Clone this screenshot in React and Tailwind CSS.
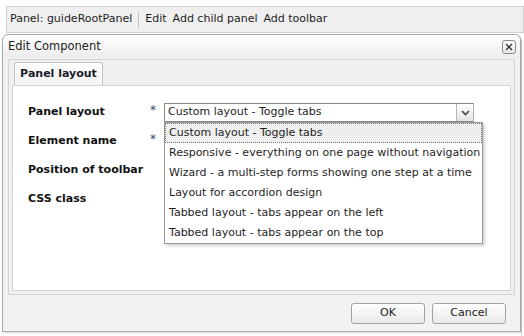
import React from 'react';

const options = [
  'Custom layout - Toggle tabs',
  'Responsive - everything on one page without navigation',
  'Wizard - a multi-step forms showing one step at a time',
  'Layout for accordion design',
  'Tabbed layout - tabs appear on the left',
  'Tabbed layout - tabs appear on the top',
];

const fields = [
  { label: 'Panel layout', required: true },
  { label: 'Element name', required: true },
  { label: 'Position of toolbar', required: false },
  { label: 'CSS class', required: false },
];

const App = () => {
  return (
    <div
      className="relative w-[524px] h-[336px] overflow-hidden bg-white text-[#1e1e1e]"
      style={{ fontFamily: '"DejaVu Sans", Tahoma, sans-serif' }}
    >
      {/* page toolbar behind the dialog */}
      <div className="mt-[6px] ml-[6px] h-[27px] border border-[#d2d2d2] bg-[#efefef] flex items-center pl-[3px] text-[11px] whitespace-nowrap">
        <span>Panel: guideRootPanel</span>
        <span className="mx-[6px] h-[16px] w-px bg-[#c4c4c4]" />
        <span>Edit</span>
        <span className="ml-[6px]">Add child panel</span>
        <span className="ml-[6px]">Add toolbar</span>
      </div>

      {/* page edge peeking out on the right */}
      <div className="absolute right-0 top-[40px] w-[3px] h-[296px] border-l border-[#d6d6d6] bg-white" />

      {/* dialog */}
      <div className="relative ml-[2px] mt-px w-[519px] h-[298px] rounded-t-[6px] border border-[#a9a9a9] bg-[#f2f2f2] flex flex-col shadow-[1px_1px_2px_rgba(0,0,0,0.15)]">
        <div className="h-[23px] rounded-t-[6px] bg-gradient-to-b from-[#ffffff] to-[#ececec] flex items-center justify-between pl-[5px] pr-[4px]">
          <span className="text-[11.5px] text-[#222]">Edit Component</span>
          <button className="w-[14px] h-[14px] rounded-[3px] border border-[#8c8c8c] bg-gradient-to-b from-white to-[#e6e6e6] flex items-center justify-center">
            <svg width="8" height="8" viewBox="0 0 8 8">
              <path d="M1 1L7 7M7 1L1 7" stroke="#333" strokeWidth="1.3" />
            </svg>
          </button>
        </div>

        {/* tab panel */}
        <div className="mx-[5px] mt-px h-[236px] border border-[#d3d3d3] bg-[#f0f0f0] flex flex-col px-[3px] pb-[3px]">
          <div className="h-[25px] flex items-end pl-[2px]">
            <div className="w-[89px] h-[23px] rounded-t-[3px] border border-b-0 border-[#c3c3c3] bg-gradient-to-b from-white to-[#f3f3f3] flex items-center justify-center text-[11px] font-bold text-[#1b1b2b]">
              Panel layout
            </div>
          </div>
          <div className="flex-1 border border-[#d4d4d4] bg-white pt-[12px] pl-[15px]">
            {fields.map((f, i) => (
              <div key={f.label} className="h-[29px] flex items-center">
                <div className="w-[122px] text-[11px] font-bold text-[#111] whitespace-nowrap">{f.label}</div>
                <div className="w-[14px] text-[12px] text-[#3d4a70] -mt-[5px]">{f.required ? '*' : ''}</div>
                {i === 0 && (
                  <div className="relative">
                    <div className="w-[310px] h-[19px] border border-[#8a8a8a] border-r-[#b5b5b5] bg-white flex items-center">
                      <span className="flex-1 pl-[3px] text-[11px]">Custom layout - Toggle tabs</span>
                      <div className="w-[17px] h-full border-l border-[#b5b5b5] bg-gradient-to-b from-white to-[#e4e4e4] flex items-center justify-center">
                        <svg width="9" height="6" viewBox="0 0 9 6">
                          <path d="M1 1L4.5 4.5L8 1" stroke="#444" strokeWidth="1.6" fill="none" />
                        </svg>
                      </div>
                    </div>
                    <div className="absolute left-0 top-[19px] z-10 w-[319px] border border-[#9a9a9a] bg-white shadow-[2px_2px_3px_rgba(0,0,0,0.18)]">
                      {options.map((o, j) => (
                        <div
                          key={o}
                          className={
                            j === 0
                              ? 'h-[20px] flex items-center pl-[3px] text-[11px] whitespace-nowrap bg-[#eeeeee] border border-dotted border-[#777]'
                              : 'h-[20px] flex items-center pl-[4px] text-[11px] whitespace-nowrap'
                          }
                        >
                          {o}
                        </div>
                      ))}
                    </div>
                  </div>
                )}
              </div>
            ))}
          </div>
        </div>

        {/* footer */}
        <div className="flex-1 flex justify-end items-start pt-[8px] pr-[14px] gap-[7px]">
          <button className="w-[74px] h-[21px] rounded-[3px] border border-[#a3a3a3] bg-gradient-to-b from-white to-[#e9e9e9] text-[11px] text-[#222]">OK</button>
          <button className="w-[74px] h-[21px] rounded-[3px] border border-[#a3a3a3] bg-gradient-to-b from-white to-[#e9e9e9] text-[11px] text-[#222]">Cancel</button>
        </div>
      </div>
    </div>
  );
};

export default App;
